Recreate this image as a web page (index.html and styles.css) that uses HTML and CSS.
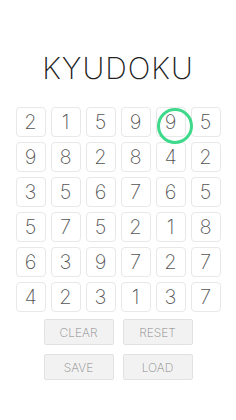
FILE: index.html
```html
<!DOCTYPE html>
<html lang="en">
<head>
    <meta charset="UTF-8">
    <meta name="viewport" content="width=device-width, initial-scale=1.0">
    <title>Kyudoku</title>
    <link rel="stylesheet" href="styles.css">
</head>
<body>
  <div class="app">
    <h1 class="title">KYUDOKU</h1>
    <div class="board">
      <div class="cell">2</div><div class="cell">1</div><div class="cell">5</div><div class="cell">9</div><div class="cell picked">9</div><div class="cell">5</div>
      <div class="cell">9</div><div class="cell">8</div><div class="cell">2</div><div class="cell">8</div><div class="cell">4</div><div class="cell">2</div>
      <div class="cell">3</div><div class="cell">5</div><div class="cell">6</div><div class="cell">7</div><div class="cell">6</div><div class="cell">5</div>
      <div class="cell">5</div><div class="cell">7</div><div class="cell">5</div><div class="cell">2</div><div class="cell">1</div><div class="cell">8</div>
      <div class="cell">6</div><div class="cell">3</div><div class="cell">9</div><div class="cell">7</div><div class="cell">2</div><div class="cell">7</div>
      <div class="cell">4</div><div class="cell">2</div><div class="cell">3</div><div class="cell">1</div><div class="cell">3</div><div class="cell">7</div>
    </div>
    <div class="controls">
      <button class="btn">CLEAR</button>
      <button class="btn">RESET</button>
      <button class="btn">SAVE</button>
      <button class="btn">LOAD</button>
    </div>
  </div>
</body>
</html>
```
FILE: styles.css
```css
* {
  box-sizing: border-box;
}
body {
  margin: 0;
  background-color: #fff;
  font-family: "Inter", "Lato", sans-serif;
}
.app {
  display: flex;
  flex-direction: column;
  align-items: center;
  padding-top: 50px;
}
.title {
  margin: 0;
  font-size: 30px;
  line-height: 36px;
  font-weight: 200;
  letter-spacing: 1px;
  color: #222;
}
.board {
  display: grid;
  grid-template-columns: repeat(6, 30px);
  grid-auto-rows: 30px;
  gap: 5px;
  margin-top: 21px;
}
.cell {
  display: flex;
  align-items: center;
  justify-content: center;
  border: 1px solid #e8e8e8;
  border-radius: 4px;
  font-size: 20px;
  font-weight: 200;
  color: #555;
}
.picked {
  position: relative;
}
.picked::after {
  content: "";
  position: absolute;
  left: 0;
  top: 0;
  width: 30px;
  height: 30px;
  border: 3px solid #3ed98a;
  border-radius: 50%;
}
.controls {
  display: grid;
  grid-template-columns: 70px 70px;
  grid-auto-rows: 26px;
  column-gap: 9px;
  row-gap: 9px;
  margin-top: 7px;
}
.btn {
  border: 1px solid #e2e2e2;
  border-radius: 2px;
  background-color: #f2f2f2;
  font-family: "Inter", "Lato", sans-serif;
  font-size: 12px;
  font-weight: 200;
  color: #888;
  padding: 0;
}
```
